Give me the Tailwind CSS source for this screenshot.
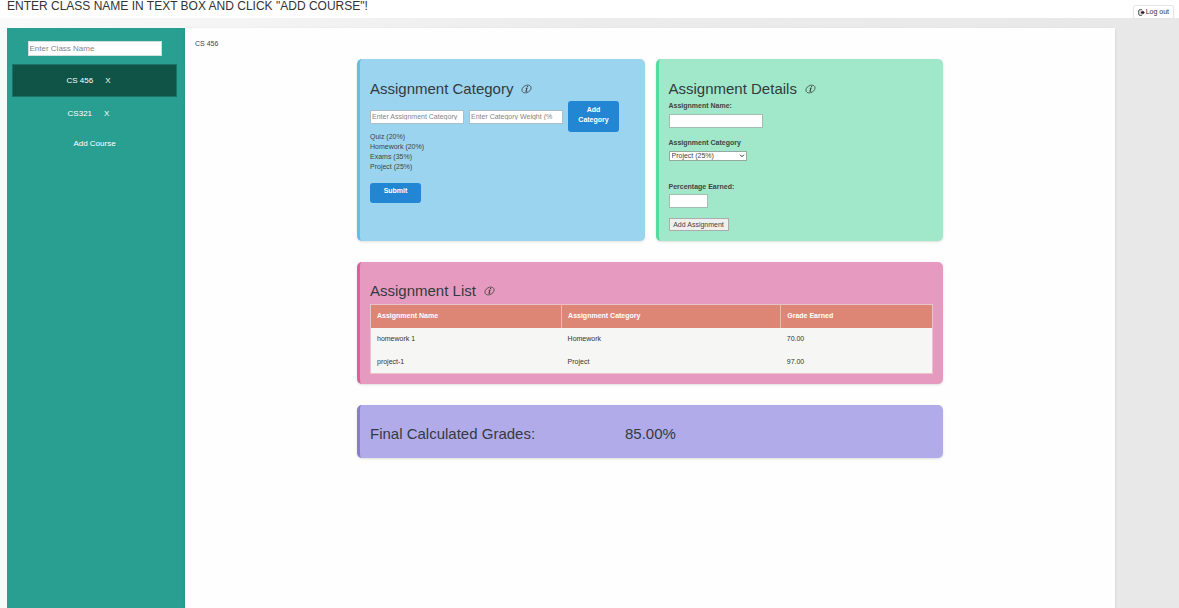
<!DOCTYPE html>
<html lang="en">
<head>
<meta charset="utf-8">
<title>Grade Calculator</title>
<script src="https://cdn.jsdelivr.net/npm/@tailwindcss/browser@4"></script>
</head>
<body class="min-h-screen flex flex-col bg-[#e9e9ea] bg-linear-to-r from-[#fafafa] via-[#ececec] to-[#e8e8e9] font-['Liberation_Sans',Arial,sans-serif] text-[7px] leading-[10px] text-[#444]">
<header class="relative h-[18px] bg-white pl-[7px]">
  <h1 class="text-[12px] leading-[13px] text-[#333]">ENTER CLASS NAME IN TEXT BOX AND CLICK "ADD COURSE"!</h1>
  <button class="absolute right-[5px] top-[5px] flex h-[14px] items-center gap-px rounded-xs border border-[#e6e6e6] bg-white px-1 text-[#333]">
    <svg class="size-[7px]" viewBox="0 0 14 14" fill="none" stroke="#222" stroke-width="1.7" aria-hidden="true"><path d="M8 1.5H3.5Q1.5 1.5 1.5 3.5v7q0 2 2 2H8"/><path d="M5.5 5h3.5V2.5L13.5 7 9 11.5V9H5.5z" fill="#222" stroke="none"/></svg>
    Log out
  </button>
</header>
<div class="mt-[10px] mr-16 ml-[7px] flex grow">
  <aside class="w-[178px] shrink-0 bg-[#299f92] pr-[8px] pl-[5px] pt-[13px] text-center text-[8px] text-white">
    <input aria-label="Enter Class Name" placeholder="Enter Class Name" class="mx-auto block h-[15px] w-[134px] border border-[#cfe0dd] bg-white px-px text-[#333] placeholder:text-[#858585]">
    <nav class="mt-2">
      <div class="flex h-[33px] items-center justify-center gap-3 border border-[#1c7267] bg-[#105448] pr-3">
        <a href="#cs456">CS 456</a><button aria-label="Delete CS 456">X</button>
      </div>
      <div class="flex h-[33px] items-center justify-center gap-3 pr-3">
        <a href="#cs321">CS321</a><button aria-label="Delete CS321">X</button>
      </div>
      <button class="mx-auto block h-7">Add Course</button>
    </nav>
  </aside>
  <main class="grow bg-[#fefefe] px-[10px] pt-[11px] shadow-sm">
    <p>CS 456</p>
    <div class="mx-auto mt-[10px] grid max-w-[586px] grid-cols-2 gap-x-[11px] gap-y-[21px]">
      <section class="min-h-[182px] rounded-[5px] border-l-[3px] border-[#5fc0e6] bg-[#9ad4ee] px-[10px] pt-5 shadow-sm">
        <h2 class="flex items-center gap-[8px] text-[15px] leading-[19px] text-[#343a40]">Assignment Category
          <svg class="h-[10px] w-[11px]" viewBox="0 0 22 20" fill="none" stroke="#333" stroke-width="1.3" aria-label="Info"><ellipse cx="11" cy="10" rx="9.8" ry="7" transform="rotate(-30 11 10)"/><path d="M9.5 8.5h2.7L9.7 14.5h2.6" stroke-width="2"/><circle cx="13.2" cy="5.4" r="1.2" fill="#333" stroke="none"/></svg></h2>
        <form class="mt-[3px] flex items-center gap-[5px]">
          <input aria-label="Assignment category" placeholder="Enter Assignment Category" class="h-[14px] w-[94px] border border-[#a9bfca] bg-white px-px leading-[12px] placeholder:text-[#858585]">
          <input aria-label="Category weight" placeholder="Enter Category Weight (%" class="h-[14px] w-[94px] border border-[#a9bfca] bg-white px-px leading-[12px] placeholder:text-[#858585]">
          <button type="button" class="h-[31px] w-[51px] rounded-[3px] bg-[#2386d3] pb-[4px] font-bold text-white">Add<br>Category</button>
        </form>
        <ul><li>Quiz (20%)</li><li>Homework (20%)</li><li>Exams (35%)</li><li>Project (25%)</li></ul>
        <button class="mt-[11px] h-5 w-[51px] rounded-[3px] bg-[#2386d3] pb-1 font-bold text-white">Submit</button>
      </section>
      <section class="min-h-[182px] rounded-[5px] border-l-[3px] border-[#53dca0] bg-[#a0e8c9] px-[10px] pt-5 shadow-sm">
        <h2 class="flex items-center gap-[8px] text-[15px] leading-[19px] text-[#343a40]">Assignment Details
          <svg class="h-[10px] w-[11px]" viewBox="0 0 22 20" fill="none" stroke="#333" stroke-width="1.3" aria-label="Info"><ellipse cx="11" cy="10" rx="9.8" ry="7" transform="rotate(-30 11 10)"/><path d="M9.5 8.5h2.7L9.7 14.5h2.6" stroke-width="2"/><circle cx="13.2" cy="5.4" r="1.2" fill="#333" stroke="none"/></svg></h2>
        <form>
          <label for="name" class="mt-[3px] block font-bold">Assignment Name:</label>
          <input id="name" class="mt-[3px] block h-[14px] w-[94px] border border-[#a5bdb1] bg-white px-px">
          <label for="cat" class="mt-[10px] block font-bold">Assignment Category</label>
          <div class="relative mt-[3px] w-[78px]">
            <select id="cat" class="block h-[10px] w-full appearance-none border border-[#93ab9f] bg-white px-[2px] leading-[8px]"><option>Project (25%)</option></select>
            <svg class="pointer-events-none absolute top-[3px] right-[2px] h-1 w-[6px]" viewBox="0 0 6 4" fill="none" stroke="#333" aria-hidden="true"><path d="M1 .7l2 2 2-2"/></svg>
          </div>
          <label for="pct" class="mt-[21px] block font-bold">Percentage Earned:</label>
          <input id="pct" class="mt-[2px] block h-[14px] w-[39px] border border-[#a5bdb1] bg-white px-px">
          <button type="button" class="mt-[10px] h-[13px] w-[60px] border border-[#a9aeab] bg-[#efefef]">Add Assignment</button>
        </form>
      </section>
      <section class="col-span-2 rounded-[5px] border-l-[3px] border-[#de5f9b] bg-[#e69abf] px-[10px] pt-[19px] pb-[10px] shadow-sm">
        <h2 class="flex items-center gap-[8px] text-[15px] leading-[19px] text-[#343a40]">Assignment List
          <svg class="h-[10px] w-[11px]" viewBox="0 0 22 20" fill="none" stroke="#333" stroke-width="1.3" aria-label="Info"><ellipse cx="11" cy="10" rx="9.8" ry="7" transform="rotate(-30 11 10)"/><path d="M9.5 8.5h2.7L9.7 14.5h2.6" stroke-width="2"/><circle cx="13.2" cy="5.4" r="1.2" fill="#333" stroke="none"/></svg></h2>
        <table class="mt-1 w-full table-fixed border border-[#edc3cb] bg-[#f6f6f5] text-left text-[#333]">
          <thead class="bg-[#de8676] text-white"><tr class="h-[23px]">
            <th class="w-[34%] border-r border-[#eeb8ae] px-[6px]">Assignment Name</th><th class="w-[39%] border-r border-[#eeb8ae] px-[6px]">Assignment Category</th><th class="px-[6px]">Grade Earned</th></tr></thead>
          <tbody>
            <tr class="h-[23px]"><td class="px-[6px]">homework 1</td><td class="px-[6px]">Homework</td><td class="px-[6px]">70.00</td></tr>
            <tr class="h-[23px]"><td class="px-[6px]">project-1</td><td class="px-[6px]">Project</td><td class="px-[6px]">97.00</td></tr>
          </tbody>
        </table>
      </section>
      <section class="col-span-2 grid grid-cols-[255px_1fr] rounded-[5px] border-l-[3px] border-[#8a7bd0] bg-[#b2abe9] px-[10px] pt-[19px] pb-[15px] text-[15px] leading-[19px] text-[#343a40] shadow-sm">
        <h2>Final Calculated Grades:</h2><p>85.00%</p>
      </section>
    </div>
  </main>
</div>
</body>
</html>
